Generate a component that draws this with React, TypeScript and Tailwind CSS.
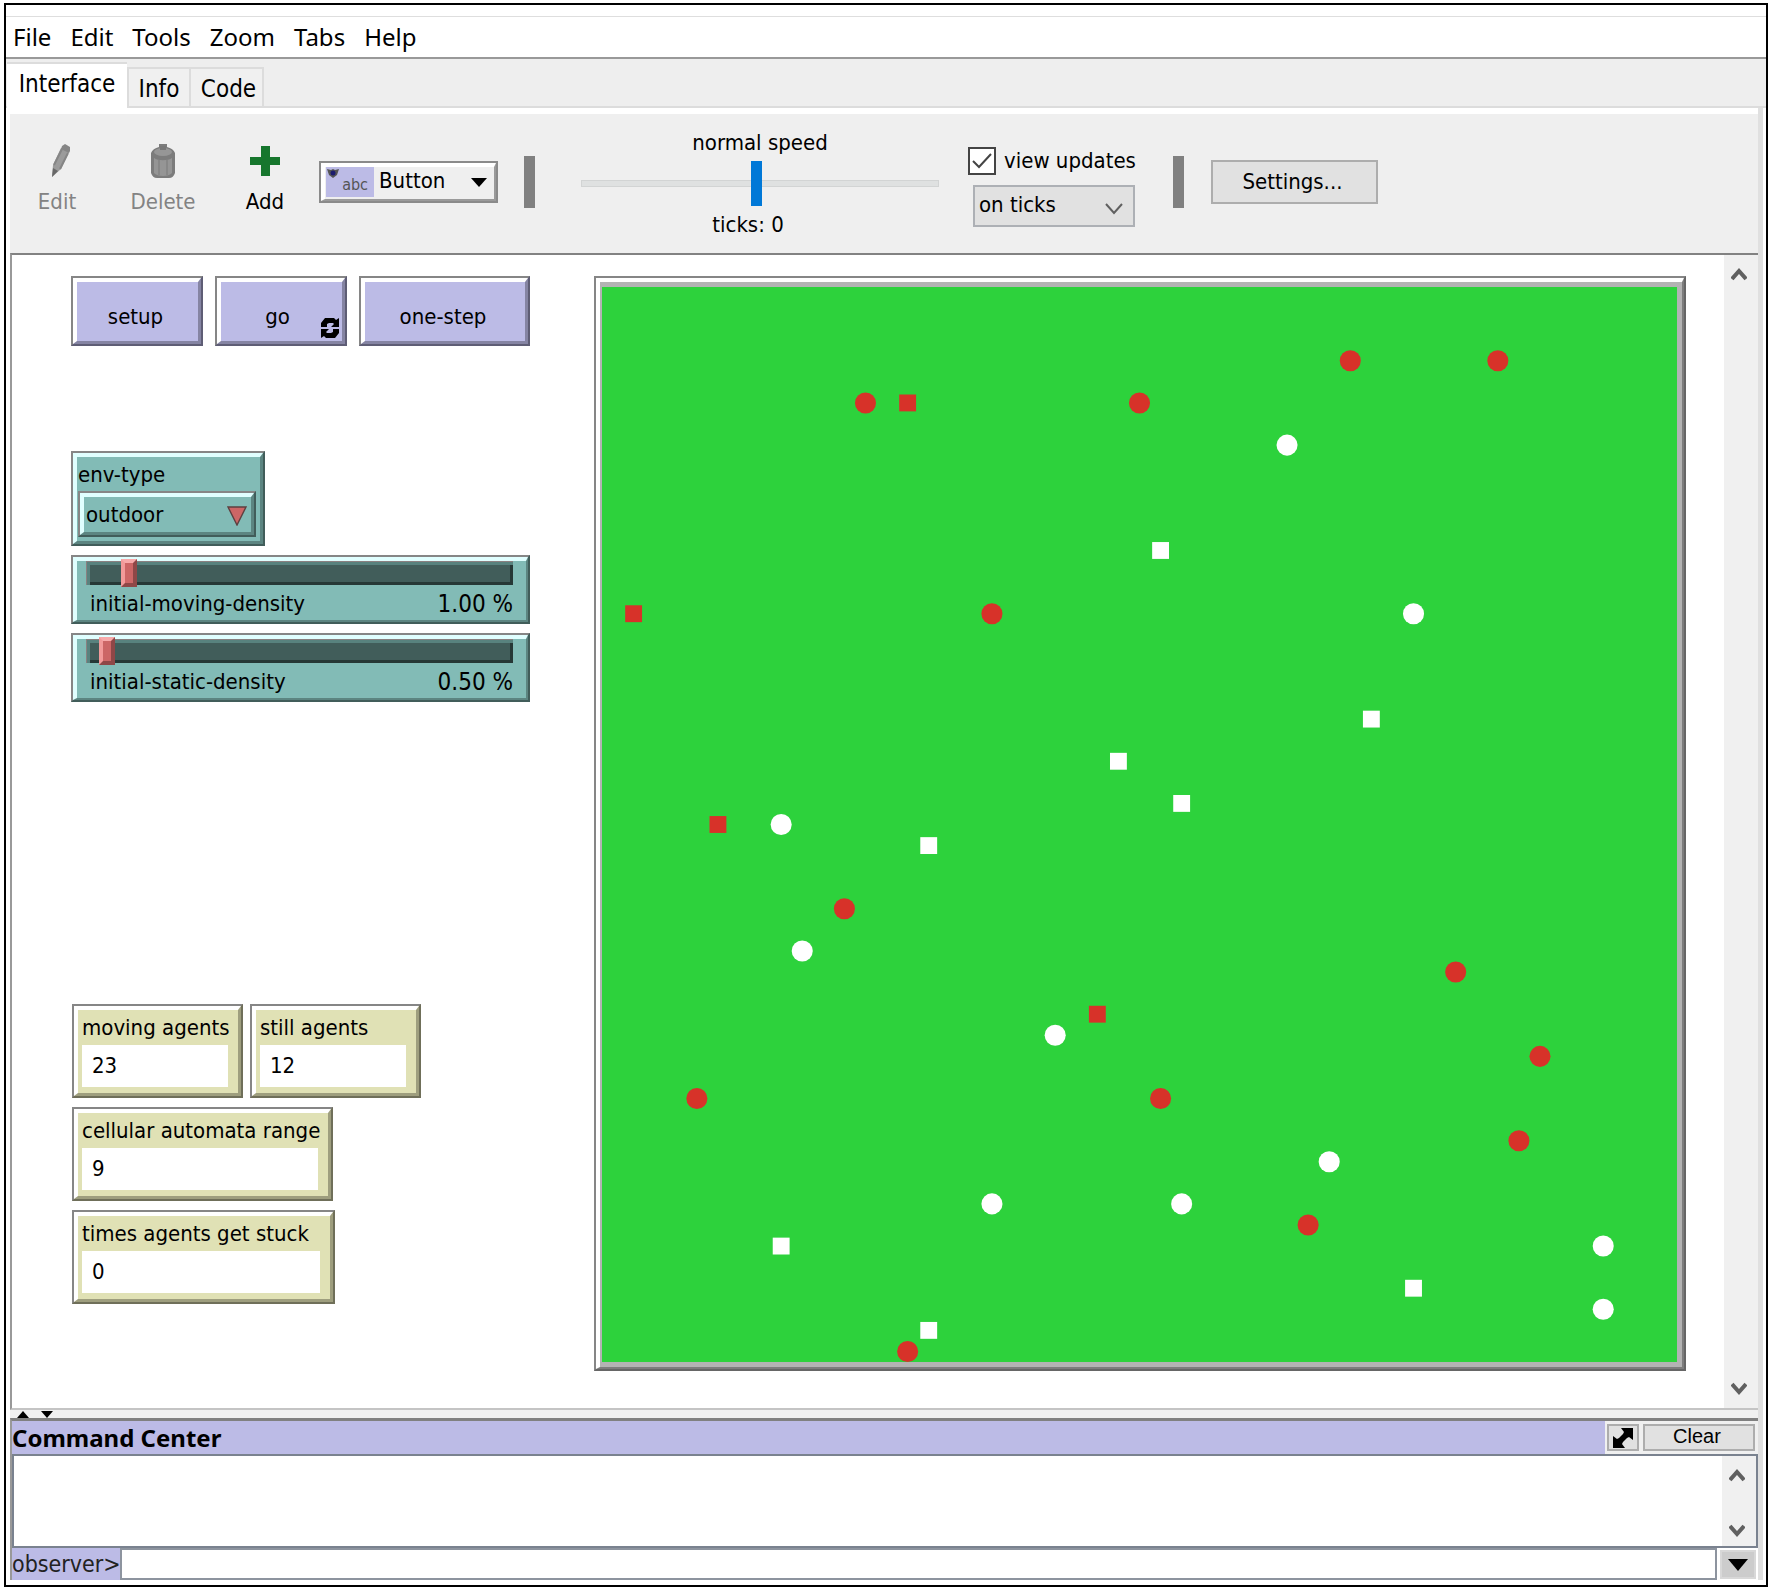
import React, { useId, useState } from "react";

type Agent = { x: number; y: number; shape: "circle" | "square"; color: "red" | "white" };

const PATCHES = 51;

const group = (shape: Agent["shape"], color: Agent["color"], cells: [number, number][]): Agent[] =>
  cells.map(([x, y]) => ({ x, y, shape, color }));

const agents: Agent[] = [
  ...group("circle", "red", [
    [35, 3], [42, 3], [12, 5], [25, 5], [18, 15], [11, 29], [40, 32], [44, 36],
    [4, 38], [26, 38], [43, 40], [33, 44], [14, 50],
  ]),
  ...group("circle", "white", [
    [32, 7], [38, 15], [8, 25], [9, 31], [21, 35], [34, 41], [18, 43], [27, 43], [47, 45], [47, 48],
  ]),
  ...group("square", "red", [[14, 5], [1, 15], [5, 25], [23, 34]]),
  ...group("square", "white", [
    [26, 12], [36, 20], [24, 22], [27, 24], [15, 26], [8, 45], [38, 47], [15, 49],
  ]),
];

function World() {
  return (
    <div className="border-2 border-t-[#868686] border-l-[#868686] border-r-[#666] border-b-[#666]">
      <div className="border-t-4 border-l-4 border-r-2 border-b-2 border-t-white border-l-white border-r-[#7d7d7d] border-b-[#7d7d7d]">
        <div className="border-t-5 border-l-2 border-r-5 border-b-5 border-[#b3b3b3]">
          <svg viewBox={`0 0 ${PATCHES} ${PATCHES}`} className="block aspect-square w-full bg-[#2dd23c]" role="img" aria-label="world view">
            {agents.map((a, i) => {
              const fill = a.color === "red" ? "#d73229" : "#ffffff";
              return a.shape === "circle" ? (
                <circle key={i} cx={a.x + 0.5} cy={a.y + 0.5} r={0.5} fill={fill} />
              ) : (
                <rect key={i} x={a.x + 0.1} y={a.y + 0.1} width={0.8} height={0.8} fill={fill} />
              );
            })}
          </svg>
        </div>
      </div>
    </div>
  );
}

function WidgetButton({ label, width, forever }: { label: string; width: string; forever?: boolean }) {
  return (
    <button className={`${width} relative h-[70px] border-2 border-t-[#868686] border-l-[#868686] border-r-[#5e5d75] border-b-[#5e5d75]`}>
      <span className={`${forever ? "pr-2" : "pr-1"} flex h-full w-full items-center justify-center border-t-4 border-l-4 border-r-3 border-b-3 border-t-white border-l-white border-r-[#8584a3] border-b-[#8584a3] bg-[#bcbbe6] pt-2.5`}>
        {label}
      </span>
      {forever && (
        <svg viewBox="0 0 18 20" className="absolute right-1.5 bottom-1.5 h-5 w-[18px]" aria-hidden="true">
          <path d="M0 9V5l4-5h9l2 2 3-2v9h-8l3-3-1-1H8L6 6v3zM18 11v4l-4 5H5l-2-2-3 2v-9h8l-3 3 1 1h4l2-1v-3z" />
        </svg>
      )}
    </button>
  );
}

function Chooser() {
  const id = useId();
  return (
    <div className="h-[95px] w-[194px] border-2 border-t-[#868686] border-l-[#868686] border-r-[#415d5a] border-b-[#415d5a]">
      <div className="flex h-full flex-col border-4 border-r-3 border-b-3 border-t-[#e0ffff] border-l-[#e0ffff] border-r-[#5c8581] border-b-[#5c8581] bg-[#82bbb6] pr-1 pb-1 pl-px">
        <label htmlFor={id} className="flex flex-1 items-center pt-0.5 leading-none">env-type</label>
        <div className="relative h-[46px] border-2 border-t-[#868686] border-l-[#868686] border-r-[#415d5a] border-b-[#415d5a]">
          <select
            id={id}
            className="block h-full w-full appearance-none border-4 border-r-3 border-b-3 border-t-[#e0ffff] border-l-[#e0ffff] border-r-[#5c8581] border-b-[#5c8581] bg-[#82bbb6] pl-0.5 leading-none outline-none"
          >
            <option>outdoor</option>
          </select>
          <svg viewBox="0 0 20 20" className="pointer-events-none absolute top-[13px] right-[7px] h-5 w-5" aria-hidden="true">
            <path d="M1 1h18l-9 18z" fill="#cc6666" stroke="#5d4040" strokeWidth="1.4" />
          </svg>
        </div>
      </div>
    </div>
  );
}

function WidgetSlider({ label, initial }: { label: string; initial: number }) {
  const id = useId();
  const [value, setValue] = useState(initial);
  return (
    <div className="h-[69px] w-[459px] border-2 border-t-[#868686] border-l-[#868686] border-r-[#415d5a] border-b-[#415d5a]">
      <div className="h-full border-4 border-r-2 border-b-2 border-t-[#e0ffff] border-l-[#e0ffff] border-r-[#5c8581] border-b-[#5c8581] bg-[#82bbb6] pr-[13px] pl-[9px]">
        <input
          id={id}
          type="range"
          min={0.2}
          max={9.7}
          step={0.1}
          value={value}
          onChange={(e) => setValue(Number(e.target.value))}
          className="-mt-0.5 block h-7 w-full appearance-none bg-transparent outline-none [&::-webkit-slider-runnable-track]:h-6 [&::-webkit-slider-runnable-track]:bg-[#415d5a] [&::-webkit-slider-runnable-track]:shadow-[inset_1px_1px_0_#8a8080,inset_4px_4px_0_#58827e,inset_-3px_-3px_0_#263836] [&::-webkit-slider-thumb]:-mt-0.5 [&::-webkit-slider-thumb]:h-7 [&::-webkit-slider-thumb]:w-4 [&::-webkit-slider-thumb]:appearance-none [&::-webkit-slider-thumb]:border-4 [&::-webkit-slider-thumb]:border-t-[#f7aaaa] [&::-webkit-slider-thumb]:border-r-[#8f4747] [&::-webkit-slider-thumb]:border-b-[#8f4747] [&::-webkit-slider-thumb]:border-l-[#f29a9a] [&::-webkit-slider-thumb]:bg-[#cc6666]"
        />
        <div className="flex h-[33px] items-center justify-between pl-1">
          <label htmlFor={id}>{label}</label>
          <output htmlFor={id} className="text-[24px]">{value.toFixed(2)} %</output>
        </div>
      </div>
    </div>
  );
}

function Monitor({ label, value, width }: { label: string; value: number; width: string }) {
  return (
    <div className={`${width} h-[94px] border-2 border-t-[#868686] border-l-[#868686] border-r-[#6f6f59] border-b-[#6f6f59]`}>
      <div className="flex h-full flex-col border-4 border-r-3 border-b-3 border-t-white border-l-white border-r-[#9e9e7e] border-b-[#9e9e7e] bg-[#e0e1b5] pr-2.5 pb-1.5 pl-1">
        <div className="flex flex-1 items-center pt-px leading-none whitespace-nowrap">{label}</div>
        <output aria-label={label} className="flex h-[42px] items-center bg-white pl-2.5">{value}</output>
      </div>
    </div>
  );
}

function Chevron({ up, className }: { up?: boolean; className: string }) {
  return (
    <svg viewBox="0 0 16 14" className={className} aria-hidden="true">
      <path d={up ? "M1 12l7-8 7 8" : "M1 2l7 8 7-8"} fill="none" stroke="#606060" strokeWidth="4" />
    </svg>
  );
}

function ScrollBar({ className }: { className: string }) {
  return (
    <div className={`flex w-[34px] shrink-0 flex-col items-center justify-between bg-[#f0f0f0] pr-1 ${className}`}>
      <button aria-label="Scroll up"><Chevron up className="h-3.5 w-4" /></button>
      <button aria-label="Scroll down"><Chevron className="h-3.5 w-4" /></button>
    </div>
  );
}

function Toolbar() {
  return (
    <div className="flex h-[139px] items-center bg-[#efefef] pb-1 pl-[23px] text-[22px] leading-7 whitespace-nowrap">
      <button className="-mt-1 flex w-12 flex-col items-center gap-2.5 text-[#838383]">
        <svg viewBox="0 0 20 34" className="ml-2 h-[34px] w-5" aria-hidden="true">
          <path d="M1 33l1-12L10 4l8 4-8 17z" fill="#9b9b9b" />
          <path d="M11 2l3-2 5 3v4l-1 2-8-4z" fill="#858585" />
          <path d="M1 33l1-9 5 3z" fill="#686868" />
          <path d="M3 21l8-16M9 25l8-16" stroke="#858585" strokeWidth="2" />
        </svg>
        Edit
      </button>
      <button className="-mt-1 ml-12 flex w-[68px] flex-col items-center gap-2.5 text-[#838383]">
        <svg viewBox="0 0 24 34" className="h-[34px] w-6" aria-hidden="true">
          <path d="M8 0h8v3c4 1 7 3 8 6v20c-1 3-3 5-6 5H6c-3 0-5-2-6-5V9c1-3 4-5 8-6z" fill="#7c7c7c" />
          <ellipse cx="12" cy="8" rx="9" ry="4" fill="#969696" />
          <path d="M9 2h6v4H9z" fill="#777" />
          <path d="M3 14c4 3 14 3 18 0v15c-3 4-15 4-18 0z" fill="#959595" />
          <path d="M8 16v15M16 16v15" stroke="#828282" strokeWidth="1.5" />
        </svg>
        Delete
      </button>
      <button className="-mt-1 ml-11 flex w-12 flex-col items-center gap-2.5 text-black">
        <svg viewBox="0 0 30 34" className="h-[34px] w-[30px]" aria-hidden="true">
          <path d="M11 2h9v11h10v8H20v11h-9V21H0v-8h11z" fill="#16762d" />
        </svg>
        Add
      </button>

      <div className="relative ml-[30px] h-[42px] w-[179px] border-2 border-[#8a8a8a]">
        <select
          aria-label="Widget type"
          className="block h-full w-full appearance-none border-4 border-r-2 border-b-2 border-t-white border-l-white border-r-[#9a9a9a] border-b-[#9a9a9a] bg-[#efefef] pb-1 pl-[54px] outline-none"
        >
          <option>Button</option>
        </select>
        <span className="pointer-events-none absolute top-1 left-[5px] flex h-[30px] w-12 items-end justify-end bg-[#bcbbe6] pr-1.5 text-base leading-6 text-[#555]">
          abc
        </span>
        <svg viewBox="0 0 12 10" className="pointer-events-none absolute top-[5px] left-1.5 h-2.5 w-3" aria-hidden="true">
          <path d="M0 1l4 1 2-1 2 1 4-1-2 6-4 3-4-3z" fill="#555" />
          <circle cx="6" cy="5" r="2.5" fill="#1c1c6e" />
        </svg>
        <svg viewBox="0 0 16 9" className="pointer-events-none absolute top-[15px] right-[9px] h-[9px] w-4" aria-hidden="true">
          <path d="M0 0h16L8 9z" />
        </svg>
      </div>

      <div className="ml-[26px] h-[52px] w-[11px] bg-[#808080]" />

      <div className="mt-1 ml-[46px] flex w-[358px] flex-col items-center">
        <label htmlFor="speed">normal speed</label>
        <input
          id="speed"
          type="range"
          defaultValue={49}
          className="my-1 block h-[46px] w-full appearance-none bg-transparent outline-none [&::-webkit-slider-runnable-track]:h-[7px] [&::-webkit-slider-runnable-track]:border [&::-webkit-slider-runnable-track]:border-[#d2d4d4] [&::-webkit-slider-runnable-track]:bg-[#dfe1e1] [&::-webkit-slider-thumb]:-mt-5 [&::-webkit-slider-thumb]:h-[45px] [&::-webkit-slider-thumb]:w-[11px] [&::-webkit-slider-thumb]:appearance-none [&::-webkit-slider-thumb]:bg-[#0078d7]"
        />
        <div className="pr-6">ticks: 0</div>
      </div>

      <div className="mt-2.5 ml-[29px] flex flex-col gap-2.5">
        <label className="flex items-center gap-2">
          <span className="relative flex h-7 w-7">
            <input type="checkbox" defaultChecked className="peer h-7 w-7 appearance-none border-2 border-[#444] bg-white" />
            <svg viewBox="0 0 28 28" className="pointer-events-none absolute inset-0 h-7 w-7 opacity-0 peer-checked:opacity-100" aria-hidden="true">
              <path d="M5 14l6 6L23 7" fill="none" stroke="#444" strokeWidth="2" />
            </svg>
          </span>
          view updates
        </label>
        <div className="relative ml-[5px] h-[42px] w-[162px]">
          <select aria-label="Update mode" className="block h-full w-full appearance-none border-2 border-[#adb0b5] bg-[#e1e1e1] pb-0.5 pl-1 outline-none">
            <option>on ticks</option>
          </select>
          <svg viewBox="0 0 18 12" className="pointer-events-none absolute top-[18px] right-3 h-3 w-[18px]" aria-hidden="true">
            <path d="M1 1l8 9 8-9" fill="none" stroke="#606060" strokeWidth="2" />
          </svg>
        </div>
      </div>

      <div className="ml-[37px] h-[52px] w-[11px] bg-[#808080]" />
      <button className="ml-[27px] h-11 w-[167px] border-2 border-[#adadad] bg-[#e1e1e1] pr-1">Settings...</button>
    </div>
  );
}

export default function App() {
  return (
    <div className="bg-white pt-[3px] pr-[2px] pb-1 pl-1 text-[22px] leading-7 text-black [font-family:'DejaVu_Sans_Condensed','Noto_Sans',sans-serif]">
      <div className="border-2 border-black pb-[5px]">
        <div className="h-3 border-b border-[#dedede]" />
        <nav className="flex h-10 items-center gap-[19px] pl-[7px] text-[24px] [font-family:'Noto_Sans',sans-serif]">
          {["File", "Edit", "Tools", "Zoom", "Tabs", "Help"].map((item) => (
            <button key={item}>{item}</button>
          ))}
        </nav>

        <div role="tablist" className="flex h-[51px] items-end border-t-2 border-[#999] border-b-2 border-b-[#dcdcdc] bg-[#eeeeee] pl-px text-[24px]">
          <button role="tab" aria-selected="true" className="relative -mb-0.5 flex h-[46px] w-[120px] items-center justify-center border-t-2 border-[#dcdcdc] bg-white pb-1">Interface</button>
          <button role="tab" aria-selected="false" className="flex h-[39px] w-[64px] items-center justify-center border-2 border-b-0 border-[#dcdcdc] bg-[#f0f0f0] pt-0.5">Info</button>
          <button role="tab" aria-selected="false" className="flex h-[39px] w-[73px] items-center justify-center border-2 border-b-0 border-l-0 border-[#dcdcdc] bg-[#f0f0f0] pt-0.5 pl-1">Code</button>
        </div>

        <div className="mr-[3px] border-r-5 border-[#e0e0e0] pt-1.5 pl-1">
          <Toolbar />

          <div className="flex border-t-2 border-b-2 border-l-2 border-t-[#828282] border-b-[#c4c4c4] border-l-[#999]">
            <main className="flex flex-1 items-start pt-[21px] pr-[38px] pb-[37px] pl-[59px] leading-7">
              <div className="flex w-[523px] shrink-0 flex-col">
                <div className="flex gap-3">
                  <WidgetButton label="setup" width="w-[132px]" />
                  <WidgetButton label="go" width="w-[132px]" forever />
                  <WidgetButton label="one-step" width="w-[171px]" />
                </div>
                <div className="mt-[105px] flex flex-col gap-[9px]">
                  <Chooser />
                  <WidgetSlider label="initial-moving-density" initial={1} />
                  <WidgetSlider label="initial-static-density" initial={0.5} />
                </div>
                <div className="mt-[302px] ml-px flex flex-col gap-[9px]">
                  <div className="flex gap-[7px]">
                    <Monitor label="moving agents" value={23} width="w-[171px]" />
                    <Monitor label="still agents" value={12} width="w-[171px]" />
                  </div>
                  <Monitor label="cellular automata range" value={9} width="w-[261px]" />
                  <Monitor label="times agents get stuck" value={0} width="w-[263px]" />
                </div>
              </div>
              <div className="min-w-0 flex-1">
                <World />
              </div>
            </main>
            <ScrollBar className="py-3" />
          </div>

          <div className="flex h-2 items-end gap-3 bg-[#f0f0f0] pl-[7px]">
            <svg viewBox="0 0 12 7" className="h-[7px] w-3" aria-hidden="true"><path d="M0 7l6-7 6 7z" /></svg>
            <svg viewBox="0 0 12 7" className="h-[7px] w-3" aria-hidden="true"><path d="M0 0h12L6 7z" /></svg>
          </div>

          <section className="border-t-3 border-l-2 border-t-[#808080] border-l-[#999]">
            <div className="flex h-[33px] bg-[#f0f0f0]">
              <h2 className="flex flex-1 items-center bg-[#bcbbe6] text-[24px] leading-none font-bold [font-family:'Noto_Sans',sans-serif]">Command Center</h2>
              <div className="flex gap-1 py-[3px] pr-[3px] pl-0.5">
                <button aria-label="Expand" className="flex h-[27px] w-8 items-center justify-center border-2 border-[#adadad] bg-[#e1e1e1]">
                  <svg viewBox="0 0 20 20" className="h-5 w-5" aria-hidden="true">
                    <path d="M8 0h12v12l-4-3-2 1-4 4-1 2 3 4H0V8l4 3 2-1 4-4 1-2z" />
                  </svg>
                </button>
                <button className="h-[27px] w-[112px] border-2 border-[#adadad] bg-[#e1e1e1] pr-1 pb-1 text-[20px] leading-none [font-family:'Liberation_Sans',sans-serif]">Clear</button>
              </div>
            </div>
            <div className="flex h-[94px] border-2 border-[#7a828f]">
              <textarea aria-label="Command output" readOnly className="block flex-1 resize-none outline-none" />
              <ScrollBar className="pt-3 pb-2" />
            </div>
            <div className="flex h-8 bg-white">
              <label htmlFor="command" className="flex w-[108px] items-center bg-[#bcbbe6] text-[23px] leading-none text-[#222]">observer&gt;</label>
              <input id="command" className="min-w-0 flex-1 border-2 border-[#8d949f] px-1 outline-none" />
              <button aria-label="Command history" className="mt-0.5 mr-0.5 ml-[3px] flex h-[29px] w-9 items-center justify-center border-2 border-[#d8d8d8] bg-[#cccccc]">
                <svg viewBox="0 0 20 12" className="h-3 w-5" aria-hidden="true"><path d="M0 0h20L10 12z" /></svg>
              </button>
            </div>
          </section>
        </div>
      </div>
    </div>
  );
}
